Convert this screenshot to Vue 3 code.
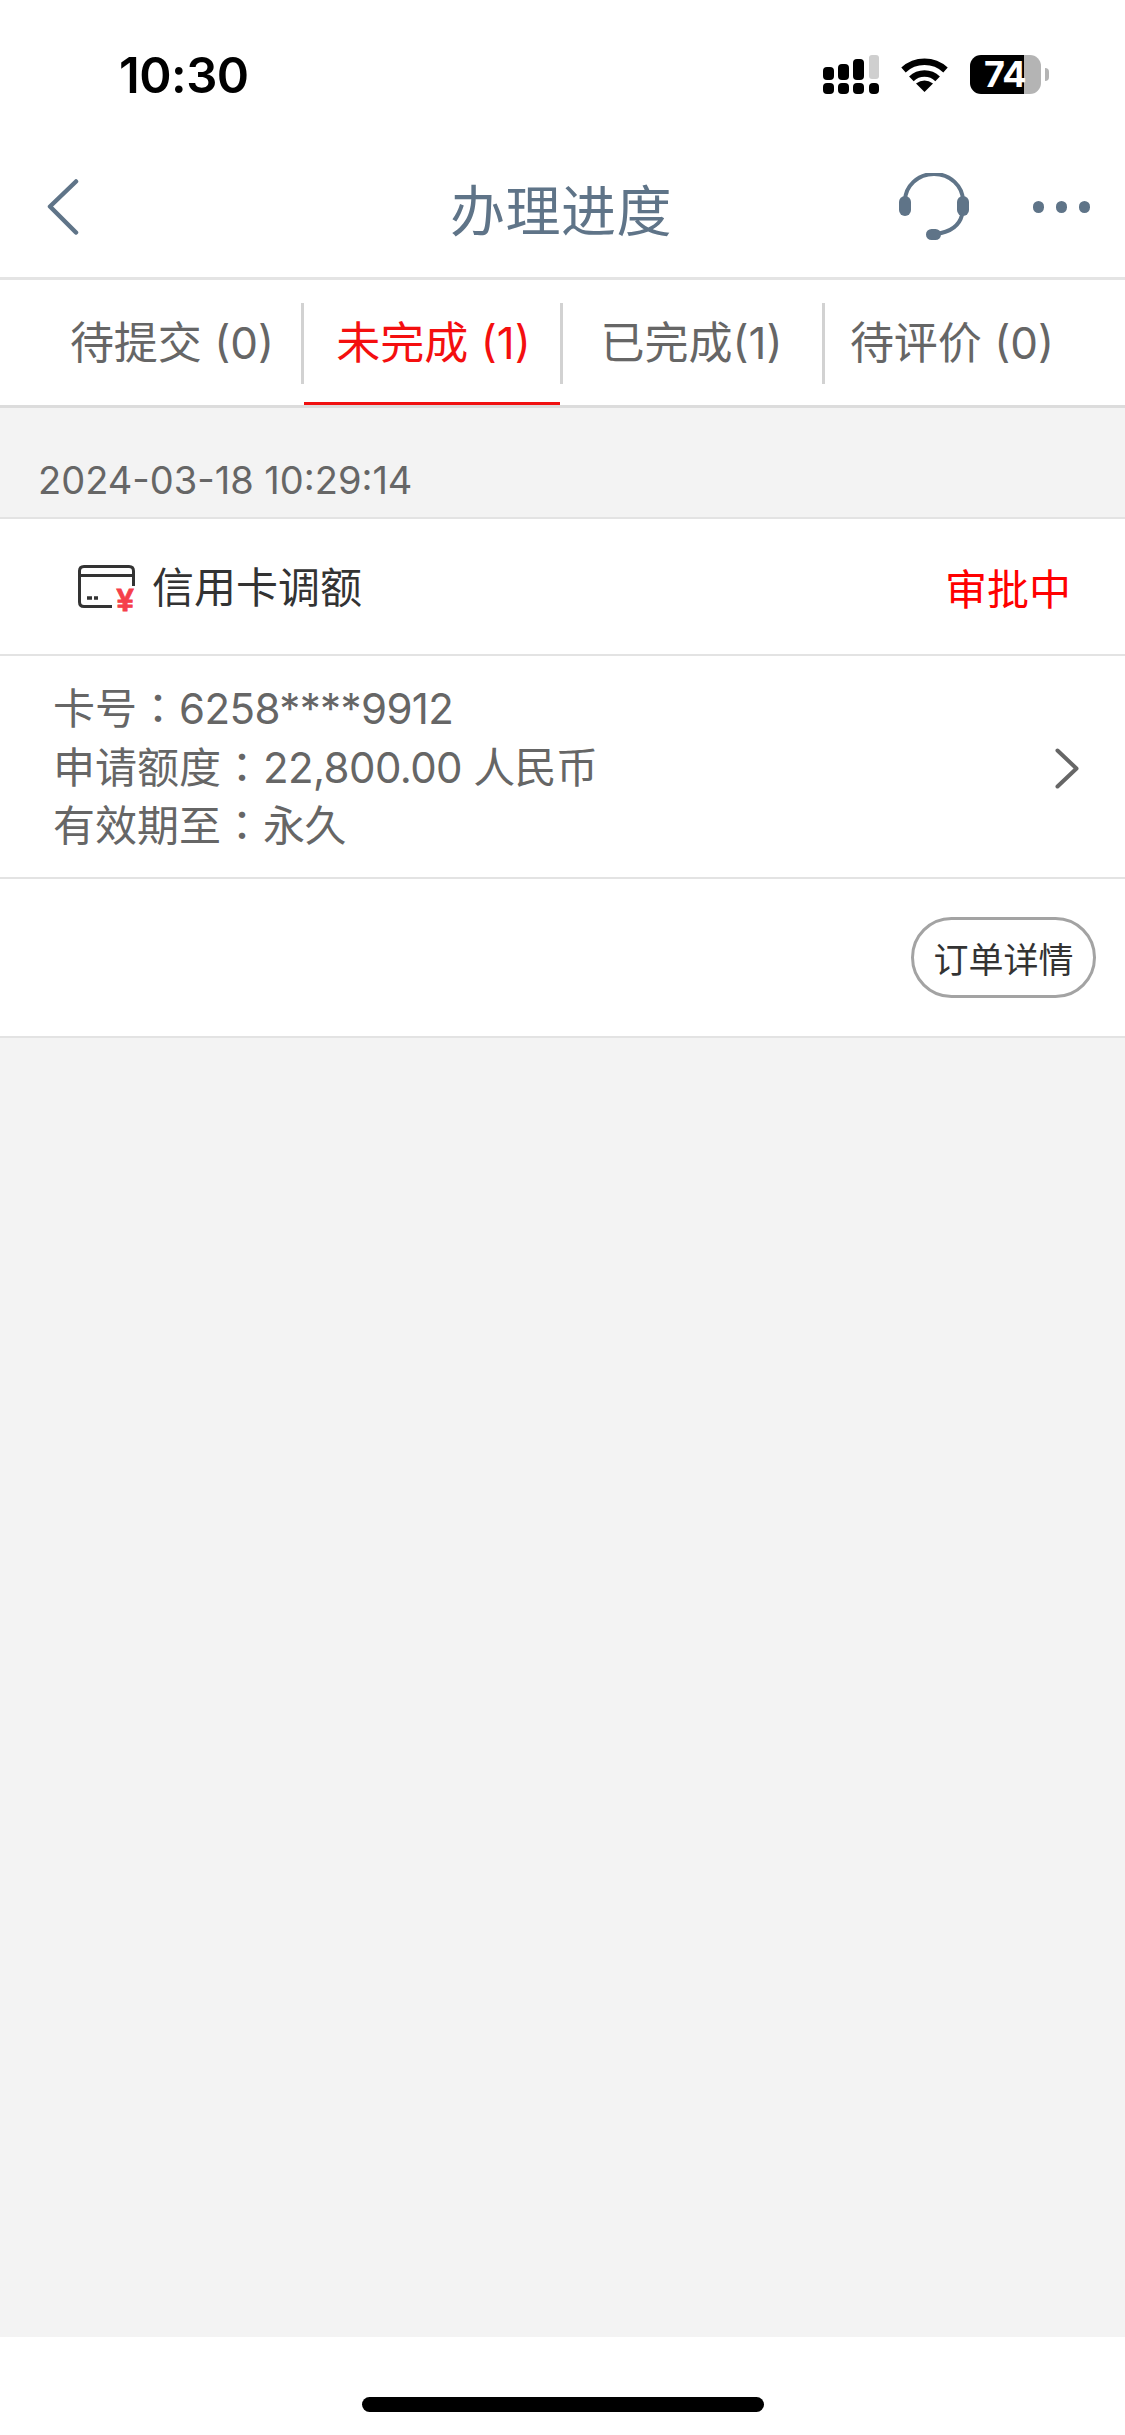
<script setup>
const tabs = [
  { label: '待提交 (0)', cls: 'first' },
  { label: '未完成 (1)', cls: 'active' },
  { label: '已完成(1)', cls: 'third' },
  { label: '待评价 (0)', cls: 'last' },
]
const lines = [
  { label: '卡号', value: '6258****9912' },
  { label: '申请额度', value: '22,800.00 人民币' },
  { label: '有效期至', value: '永久' },
]
</script>

<template>
  <div class="page">
    <div class="status">
      <span class="time">10:30</span>
      <div class="status-icons">
        <svg class="signal" width="56" height="39" viewBox="0 0 56 39">
          <rect x="0" y="12" width="11" height="13" rx="4" fill="#000" />
          <rect x="15" y="9" width="11" height="16" rx="4" fill="#000" />
          <rect x="30" y="4" width="11" height="21" rx="4" fill="#000" />
          <rect x="46" y="0" width="10" height="24" rx="3" fill="#cfcfcf" />
          <rect x="0" y="28" width="11" height="11" rx="4" fill="#000" />
          <rect x="15" y="28" width="11" height="11" rx="4" fill="#000" />
          <rect x="30" y="28" width="11" height="11" rx="4" fill="#000" />
          <rect x="46" y="28" width="10" height="11" rx="4" fill="#000" />
        </svg>
        <svg class="wifi" width="47" height="35" viewBox="0 0 47 35">
          <path d="M2.5 13A31 31 0 0 1 44.500 13" fill="none" stroke="#000" stroke-width="6.500" />
          <path d="M10.400 21.900A18.500 18.500 0 0 1 36.600 21.900" fill="none" stroke="#000" stroke-width="6.500" />
          <path d="M23.500 35L15 26.500Q23.500 20.500 32 26.500Z" fill="#000" />
        </svg>
        <div class="battery-wrap">
          <div class="battery">74</div>
          <span class="nub"></span>
        </div>
      </div>
    </div>

    <header class="nav">
      <svg class="back" width="32" height="56" viewBox="0 0 32 56">
        <path d="M29 2.500L3 27.500L29 53.500" fill="none" stroke="#5f7488" stroke-width="4.500" stroke-linecap="round" stroke-linejoin="round" />
      </svg>
      <h1 class="title">办理进度</h1>
      <div class="nav-actions">
        <svg class="headset" width="72" height="68" viewBox="0 0 72 68">
          <path d="M7 28A29 27 0 0 1 65 28" fill="none" stroke="#5f7488" stroke-width="4" />
          <rect x="1" y="23" width="12" height="20" rx="6" fill="#5f7488" />
          <rect x="59" y="23" width="12" height="20" rx="6" fill="#5f7488" />
          <path d="M64 42Q60 58 38 61" fill="none" stroke="#5f7488" stroke-width="4" />
          <rect x="28" y="56" width="15" height="11" rx="5.500" fill="#5f7488" />
        </svg>
        <div class="dots"><i></i><i></i><i></i></div>
      </div>
    </header>

    <nav class="tabs">
      <div v-for="tab in tabs" :key="tab.label" class="tab" :class="tab.cls">{{ tab.label }}</div>
    </nav>

    <main class="main">
      <div class="date">2024-03-18 10:29:14</div>
      <section class="row head">
        <div class="biz">
          <svg class="card" width="58" height="44" viewBox="0 0 58 44">
            <path d="M34 41.500H6Q1.500 41.500 1.500 37V6Q1.500 1.500 6 1.500H51Q55.500 1.500 55.500 6V21" fill="none" stroke="#333" stroke-width="3" />
            <path d="M1.500 10.500H55.500" fill="none" stroke="#333" stroke-width="3" />
            <path d="M9 33H14M16 33H20" fill="none" stroke="#333" stroke-width="3.500" />
            <text x="47" y="46" text-anchor="middle" class="yen">¥</text>
          </svg>
          <span class="biz-name">信用卡调额</span>
        </div>
        <span class="state">审批中</span>
      </section>
      <section class="row info">
        <div class="lines">
          <p v-for="line in lines" :key="line.label">{{ line.label }}<span class="colon">：</span><span class="value">{{ line.value }}</span></p>
        </div>
        <svg class="chev" width="24" height="41" viewBox="0 0 24 41">
          <path d="M2.500 2.500L21.500 20.500L2.500 38.500" fill="none" stroke="#666" stroke-width="4" stroke-linecap="round" stroke-linejoin="round" />
        </svg>
      </section>
      <section class="row foot">
        <button class="detail">订单详情</button>
      </section>
    </main>

    <footer class="home"><span class="indicator"></span></footer>
  </div>
</template>

<style scoped>
.page {
  width: 1125px;
  height: 2435px;
  display: flex;
  flex-direction: column;
  background: #fff;
  font-family: Inter, "Noto Sans CJK SC", sans-serif;
  overflow: hidden;
}
.status {
  height: 140px;
  box-sizing: border-box;
  display: flex;
  justify-content: space-between;
  align-items: flex-start;
  padding: 55px 76px 0 119px;
}
.time {
  font-size: 49px;
  line-height: 42px;
  font-weight: 600;
  color: #000;
  letter-spacing: -0.5px;
}
.status-icons {
  display: flex;
  align-items: flex-start;
  gap: 22px;
}
.wifi {
  margin-top: 2px;
}
.battery-wrap {
  display: flex;
  align-items: center;
  gap: 4px;
  height: 39px;
}
.battery {
  width: 71px;
  height: 39px;
  box-sizing: border-box;
  padding-left: 14px;
  border-radius: 11px;
  background: linear-gradient(90deg, #000 54px, #b4b4b4 54px);
  color: #fff;
  font-size: 36px;
  font-weight: 700;
  line-height: 39px;
  letter-spacing: -0.5px;
  white-space: nowrap;
}
.nub {
  width: 4px;
  height: 13px;
  border-radius: 0 6px 6px 0;
  background: #b4b4b4;
}
.nav {
  height: 140px;
  box-sizing: border-box;
  display: grid;
  grid-template-columns: 1fr auto 1fr;
  align-items: center;
  padding: 0 35px 3px 47px;
  border-bottom: 3px solid #e4e4e4;
}
.title {
  margin: 0 15px 0 0;
  font-size: 55px;
  font-weight: 400;
  color: #5f7488;
  letter-spacing: 0.5px;
}
.nav-actions {
  display: flex;
  align-items: center;
  justify-content: flex-end;
  gap: 63px;
}
.dots {
  display: flex;
  gap: 11.5px;
}
.dots i {
  width: 11.500px;
  height: 11.500px;
  border-radius: 50%;
  background: #5f7488;
}
.tabs {
  height: 128px;
  box-sizing: border-box;
  display: grid;
  grid-template-columns: 304px 259px 262px 300px;
  border-bottom: 3px solid #dcdcdc;
}
.tab {
  position: relative;
  display: flex;
  align-items: center;
  justify-content: center;
  font-size: 44px;
  color: #666;
  white-space: nowrap;
  padding-bottom: 5px;
}
.tab:not(.last)::after {
  content: "";
  position: absolute;
  right: 0;
  top: 23px;
  height: 81px;
  width: 3px;
  background: #d2d2d2;
}
.first {
  padding-left: 40px;
}
.third {
  padding-right: 5px;
}
.last {
  padding-right: 46px;
}
.active {
  color: #f40f0f;
}
.active::before {
  content: "";
  position: absolute;
  left: 0;
  right: 3px;
  bottom: 0;
  height: 3px;
  background: #f01010;
}
.main {
  flex: 1;
  background: #f3f3f3;
}
.date {
  height: 111px;
  box-sizing: border-box;
  padding: 49px 0 0 38px;
  font-size: 38px;
  line-height: 46px;
  color: #666;
  border-bottom: 2px solid #e3e3e3;
}
.row {
  display: flex;
  align-items: center;
  justify-content: space-between;
  background: #fff;
  border-bottom: 2px solid #e3e3e3;
  box-sizing: border-box;
}
.head {
  height: 137px;
  padding: 0 54px 0 78px;
  font-size: 42px;
  color: #333;
}
.biz {
  display: flex;
  align-items: center;
  gap: 16px;
}
.biz-name {
  padding-bottom: 4px;
}
.card {
  overflow: visible;
}
.yen {
  font-family: "Liberation Sans", sans-serif;
  font-size: 31px;
  font-weight: 700;
  fill: #f5404a;
  stroke: #f5404a;
  stroke-width: 0.8px;
}
.state {
  color: #f00;
}
.info {
  height: 223px;
  padding: 3px 46px 0 53px;
}
.lines p {
  margin: 0;
  font-size: 42px;
  line-height: 58.500px;
  color: #666;
}
.colon {
  font-family: "Noto Sans CJK TC", sans-serif;
  line-height: 1;
}
.value {
  letter-spacing: -0.6px;
}
.foot {
  height: 159px;
  justify-content: flex-end;
  padding-right: 29px;
}
.detail {
  width: 185px;
  height: 81px;
  padding: 0;
  background: #fff;
  border: 3px solid #a3a3a3;
  border-radius: 41px;
  font-family: inherit;
  font-size: 35px;
  color: #333;
}
.home {
  height: 98px;
  box-sizing: border-box;
  display: flex;
  justify-content: center;
  padding-top: 60px;
  background: #fff;
}
.indicator {
  width: 402px;
  height: 15px;
  border-radius: 8px;
  background: #000;
}
</style>
